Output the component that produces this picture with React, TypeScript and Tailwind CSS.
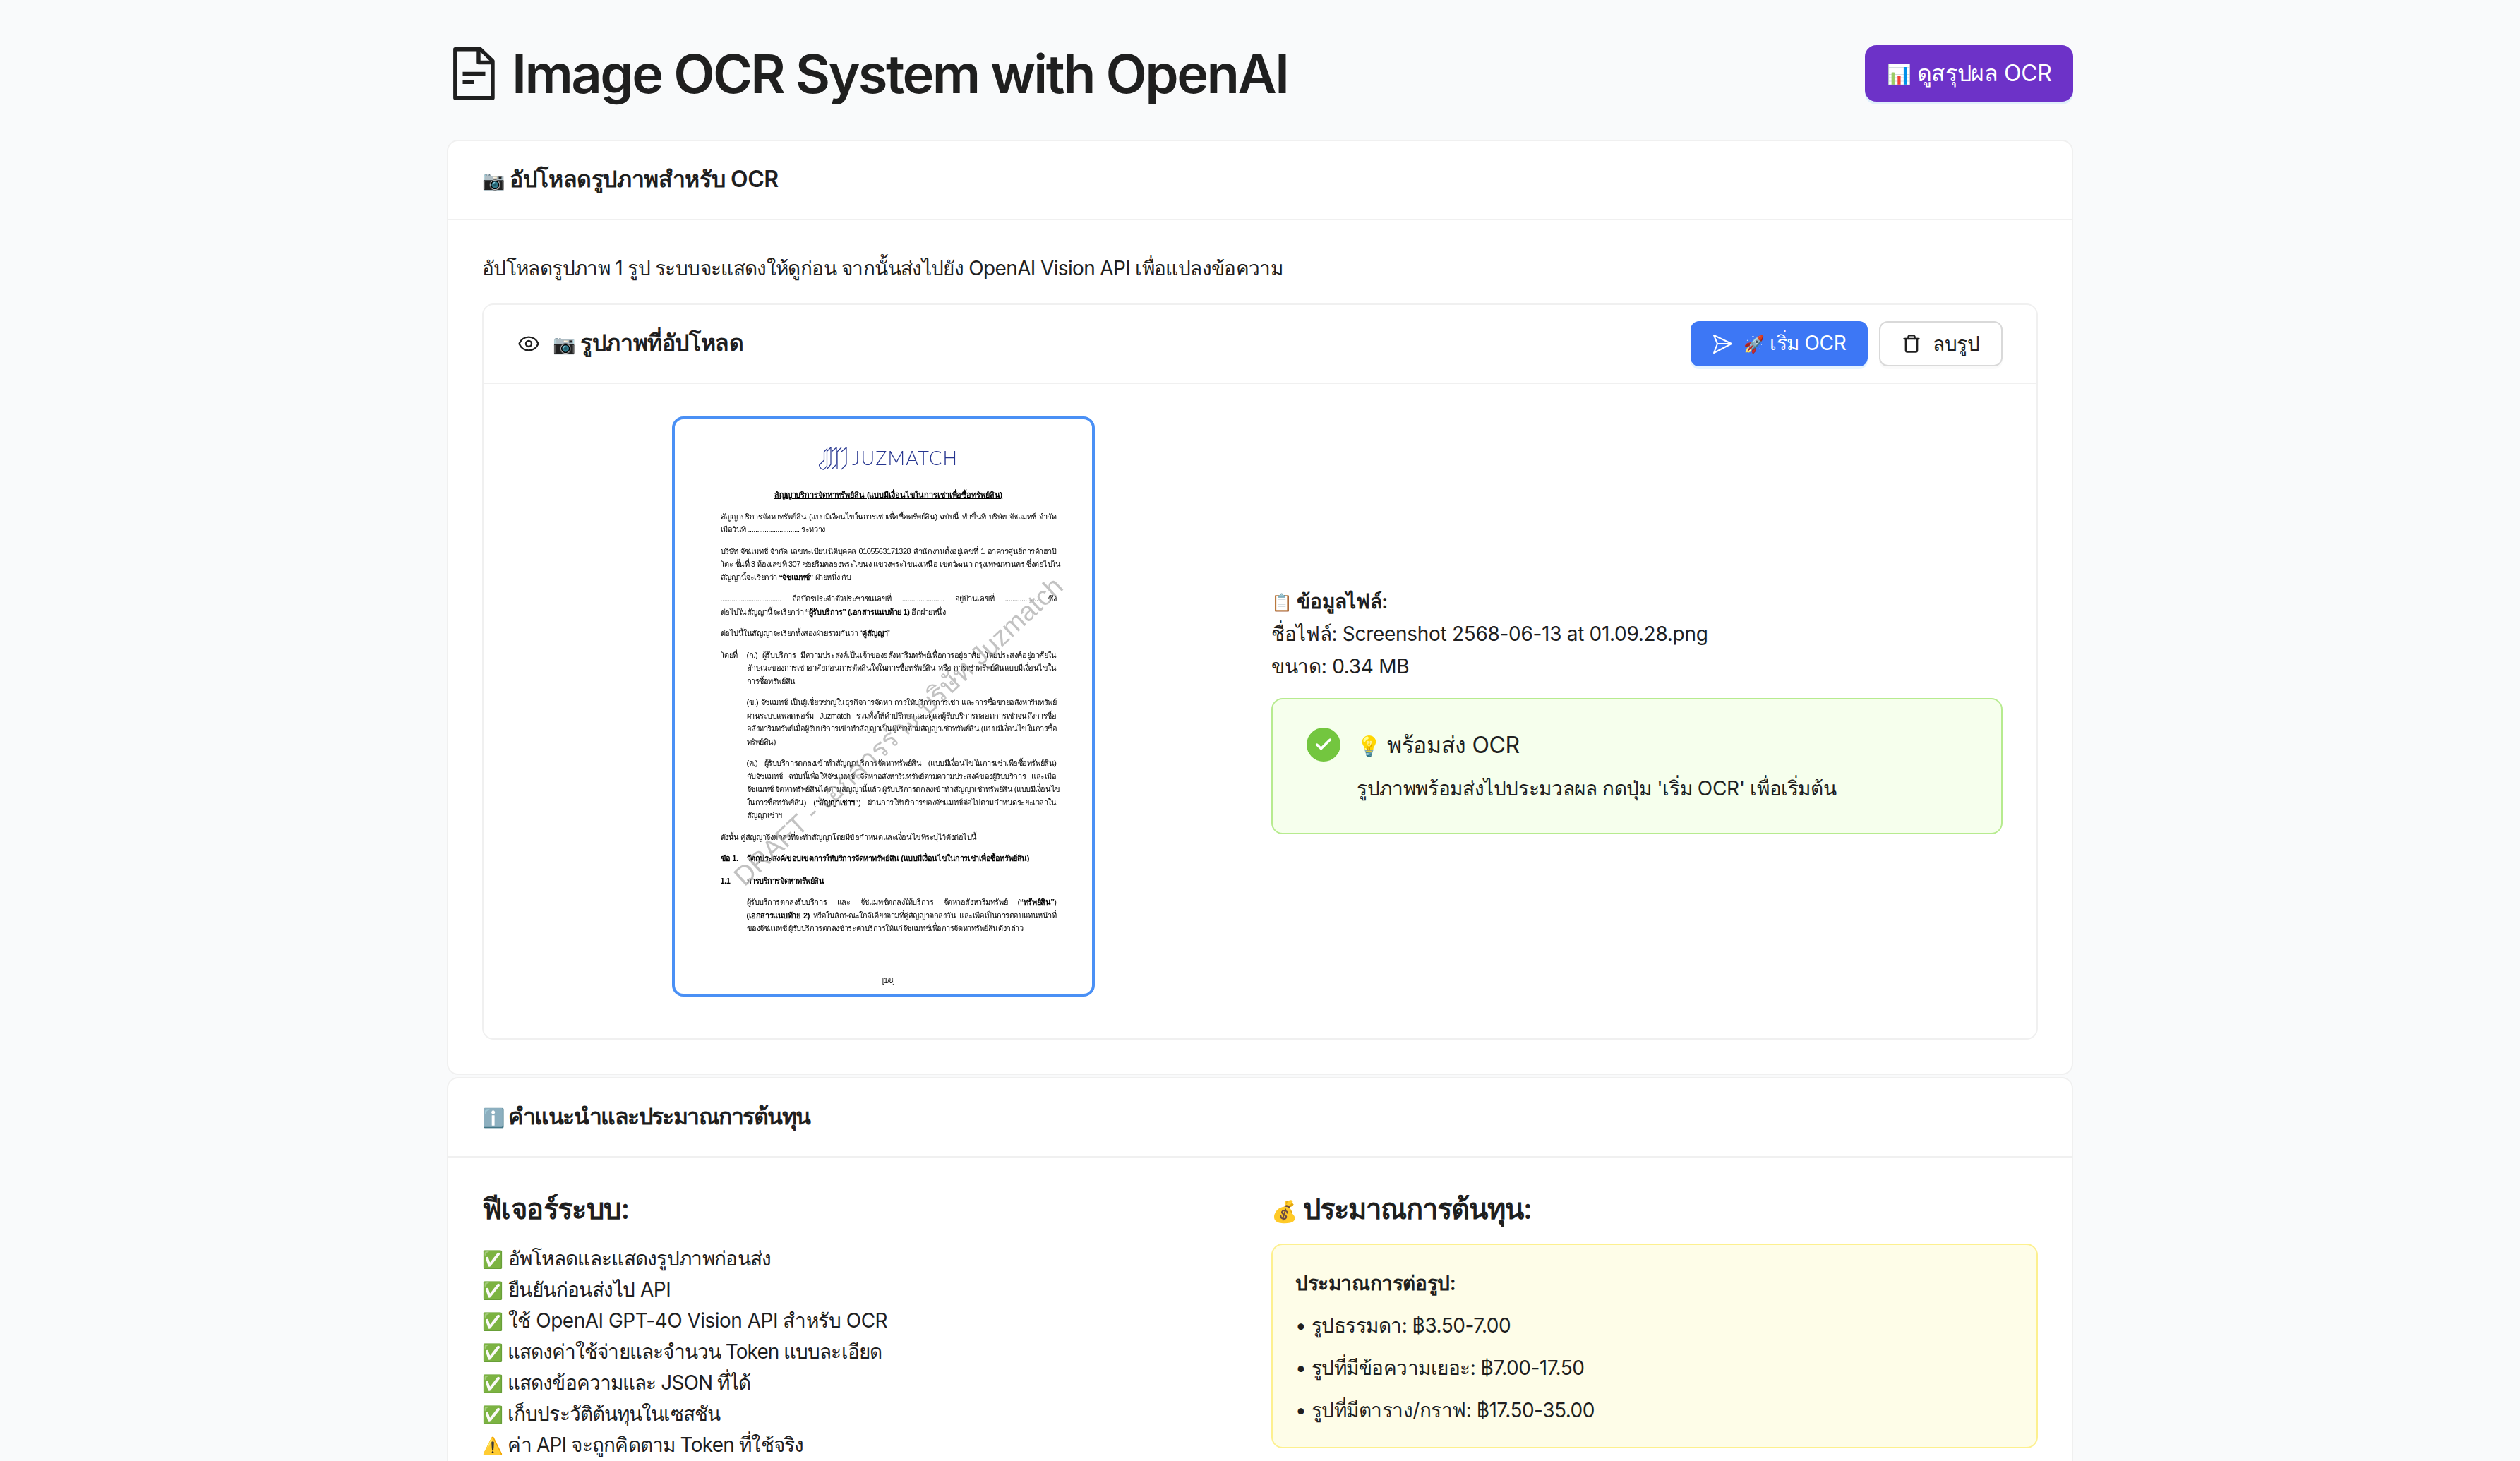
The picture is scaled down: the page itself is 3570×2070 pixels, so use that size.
import { Eye, Trash, Check } from 'lucide-react'
import type { ReactNode } from 'react'

const sans = "font-['Inter','Noto_Sans',sans-serif]"

function Card({ title, children }: { title: ReactNode; children: ReactNode }) {
  return (
    <div className="rounded-2xl border-2 border-[#f0f0f0] bg-white">
      <div className="flex h-[112px] items-center border-b-2 border-[#f0f0f0] px-12 text-[32px] font-semibold">{title}</div>
      {children}
    </div>
  )
}

function Line({ children, full, className }: { children: ReactNode; full?: boolean; className?: string }) {
  return (
    <div className={`h-[18.5px] whitespace-nowrap ${full ? 'text-justify [text-align-last:justify]' : ''} ${className ?? ''}`}>
      {children}
    </div>
  )
}

function DocImage() {
  return (
    <div className="relative h-[822px] w-[599px] overflow-hidden rounded-2xl border-4 border-[#4a90f5] bg-white">
      <div className="h-full pl-[65px] pr-[50px] pt-[30px] font-['Liberation_Sans',sans-serif] text-[11px] leading-[18.5px] tracking-[-0.44px] text-black blur-[0.25px]">
        <div className="mb-[18px] flex h-[50px] items-center justify-center gap-[7px] text-[#26358f]">
          <svg width="40" height="33" viewBox="0 0 40 33" fill="none" stroke="currentColor" strokeWidth="1.2">
            <path d="M0.5 26l7-7v-12l4-4v24l-4 5c-3 1-6-2-7-6z" />
            <path d="M17 1v24l-5 6M25 1v24l-7 7M39 1v24l-7 7" />
            <path d="M17 1l-5 5M25 1l-7 6M32 1l-6 6v25M39 1l-7 6" />
          </svg>
          <span className="font-['Lato',sans-serif] text-[27px] font-light tracking-[1.2px]">JUZMATCH</span>
        </div>
        <div className="mb-[12px] text-center font-bold tracking-[-0.1px] underline">สัญญาบริการจัดหาทรัพย์สิน (แบบมีเงื่อนไขในการเช่าเพื่อซื้อทรัพย์สิน)</div>
        <div className="mb-[12px]">
          <Line full>สัญญาบริการจัดหาทรัพย์สิน (แบบมีเงื่อนไขในการเช่าเพื่อซื้อทรัพย์สิน) ฉบับนี้ ทำขึ้นที่ บริษัท จัชแมทช์ จำกัด</Line>
          <Line>เมื่อวันที่ ............................ ระหว่าง</Line>
        </div>
        <div className="mb-[12px]">
          <Line full>บริษัท จัชแมทช์ จำกัด เลขทะเบียนนิติบุคคล 0105563171328 สำนักงานตั้งอยู่เลขที่ 1 อาคารศูนย์การค้าฮาบิ</Line>
          <Line full>โตะ ชั้นที่ 3 ห้องเลขที่ 307 ซอยริมคลองพระโขนง แขวงพระโขนงเหนือ เขตวัฒนา กรุงเทพมหานคร ซึ่งต่อไปใน</Line>
          <Line>สัญญานี้จะเรียกว่า <b>“จัชแมทช์”</b> ฝ่ายหนึ่ง กับ</Line>
        </div>
        <div className="mb-[12px]">
          <Line full>................................. ถือบัตรประจำตัวประชาชนเลขที่ ....................... อยู่บ้านเลขที่ .................. ซึ่ง</Line>
          <Line>ต่อไปในสัญญานี้จะเรียกว่า <b>“ผู้รับบริการ” (เอกสารแนบท้าย 1)</b> อีกฝ่ายหนึ่ง</Line>
        </div>
        <div className="mb-[12px]">
          <Line>ต่อไปนี้ในสัญญาจะเรียกทั้งสองฝ่ายรวมกันว่า “<b>คู่สัญญา</b>”</Line>
        </div>
        <div className="relative mb-[12px] pl-[37px]">
          <span className="absolute left-0 top-0">โดยที่</span>
          <Line full>(ก.) ผู้รับบริการ มีความประสงค์เป็นเจ้าของอสังหาริมทรัพย์เพื่อการอยู่อาศัย โดยประสงค์อยู่อาศัยใน</Line>
          <Line full>ลักษณะของการเช่าอาศัยก่อนการตัดสินใจในการซื้อทรัพย์สิน หรือ การเช่าทรัพย์สินแบบมีเงื่อนไขใน</Line>
          <Line>การซื้อทรัพย์สิน</Line>
        </div>
        <div className="mb-[12px] pl-[37px]">
          <Line full>(ข.) จัชแมทช์ เป็นผู้เชี่ยวชาญในธุรกิจการจัดหา การให้บริการการเช่า และการซื้อขายอสังหาริมทรัพย์</Line>
          <Line full>ผ่านระบบแพลตฟอร์ม Juzmatch รวมทั้งให้คำปรึกษาและดูแลผู้รับบริการตลอดการเช่าจนถึงการซื้อ</Line>
          <Line full>อสังหาริมทรัพย์เมื่อผู้รับบริการเข้าทำสัญญาเป็นผู้เช่าตามสัญญาเช่าทรัพย์สิน (แบบมีเงื่อนไขในการซื้อ</Line>
          <Line>ทรัพย์สิน)</Line>
        </div>
        <div className="mb-[12px] pl-[37px]">
          <Line full>(ค.) ผู้รับบริการตกลงเข้าทำสัญญาบริการจัดหาทรัพย์สิน (แบบมีเงื่อนไขในการเช่าเพื่อซื้อทรัพย์สิน)</Line>
          <Line full>กับจัชแมทช์ ฉบับนี้เพื่อให้จัชแมทช์ จัดหาอสังหาริมทรัพย์ตามความประสงค์ของผู้รับบริการ และเมื่อ</Line>
          <Line full>จัชแมทช์ จัดหาทรัพย์สินได้ตามสัญญานี้แล้ว ผู้รับบริการตกลงเข้าทำสัญญาเช่าทรัพย์สิน (แบบมีเงื่อนไข</Line>
          <Line full>ในการซื้อทรัพย์สิน) (<b>“สัญญาเช่าฯ”</b>) ผ่านการให้บริการของจัชแมทช์ต่อไปตามกำหนดระยะเวลาใน</Line>
          <Line>สัญญาเช่าฯ</Line>
        </div>
        <div className="mb-[12px]">
          <Line>ดังนั้น คู่สัญญาจึงตกลงที่จะทำสัญญาโดยมีข้อกำหนดและเงื่อนไขที่ระบุไว้ดังต่อไปนี้</Line>
        </div>
        <div className="relative mb-[13px] pl-[37px] font-bold">
          <span className="absolute left-0 top-0">ข้อ 1.</span>
          <Line>วัตถุประสงค์/ขอบเขตการให้บริการจัดหาทรัพย์สิน (แบบมีเงื่อนไขในการเช่าเพื่อซื้อทรัพย์สิน)</Line>
        </div>
        <div className="relative mb-[12px] pl-[37px] font-bold">
          <span className="absolute left-0 top-0">1.1</span>
          <Line>การบริการจัดหาทรัพย์สิน</Line>
        </div>
        <div className="pl-[37px]">
          <Line full>ผู้รับบริการตกลงรับบริการ และ จัชแมทช์ตกลงให้บริการ จัดหาอสังหาริมทรัพย์ (<b>“ทรัพย์สิน”</b>)</Line>
          <Line full><b>(เอกสารแนบท้าย 2)</b> หรือในลักษณะใกล้เคียงตามที่คู่สัญญาตกลงกัน และเพื่อเป็นการตอบแทนหน้าที่</Line>
          <Line>ของจัชแมทช์ ผู้รับบริการตกลงชำระค่าบริการให้แก่จัชแมทช์เพื่อการจัดหาทรัพย์สินดังกล่าว</Line>
        </div>
        <div className="absolute bottom-[9px] left-[65px] right-[50px] text-center text-[10px]">[1/8]</div>
        {/* watermark */}
        <div className="absolute left-[9px] top-[430px] w-[600px] -rotate-[43deg] whitespace-nowrap text-center text-[38px] leading-none tracking-normal text-[#999]/60">
          DRAFT - เอกสารร่าง บริษัท Juzmatch
        </div>
      </div>
    </div>
  )
}

const features = [
  { icon: '✅', text: 'อัพโหลดและแสดงรูปภาพก่อนส่ง', cls: 'tracking-[-0.7px]' },
  { icon: '✅', text: 'ยืนยันก่อนส่งไป API', cls: 'tracking-[-0.55px]' },
  { icon: '✅', text: 'ใช้ OpenAI GPT-4O Vision API สำหรับ OCR', cls: 'tracking-[-0.5px]' },
  { icon: '✅', text: 'แสดงค่าใช้จ่ายและจำนวน Token แบบละเอียด', cls: 'tracking-[-0.95px]' },
  { icon: '✅', text: 'แสดงข้อความและ JSON ที่ได้', cls: 'tracking-[-0.9px]' },
  { icon: '✅', text: 'เก็บประวัติต้นทุนในเซสชัน', cls: 'tracking-[-0.9px]' },
  { icon: '⚠️', text: 'ค่า API จะถูกคิดตาม Token ที่ใช้จริง', cls: 'tracking-[-0.77px]' },
]

export default function App() {
  return (
    <div className={`h-screen overflow-hidden bg-[#f9fafb] text-[28px] leading-[44px] tracking-[-0.45px] text-[#1f1f1f] ${sans}`}>
      <div className="mx-auto w-[2304px] pt-16">
        <div className="mb-[54px] flex h-20 items-center justify-between">
          <h1 className="flex items-center gap-[24px] pl-[9px] text-[76px] font-semibold leading-[92px] tracking-[-2.6px]">
            <svg className="h-[75px] w-[59px]" viewBox="11.5 11.5 59 75" fill="none" stroke="#1f1f1f" strokeWidth="5.4" strokeLinejoin="round">
              <path d="M14.3 14.3H50L67.5 31V83.3H14.3Z" />
              <path d="M47.5 14.3V33H67.5" />
              <path d="M25 49H57M25 60.7H40.5" />
            </svg>
            Image OCR System with OpenAI
          </h1>
          <button className="h-20 w-[295px] rounded-2xl bg-[#6d32c8] text-[32px] tracking-[-0.4px] text-white shadow-[0_4px_0_rgba(5,145,255,0.1)]"><span className="text-[28px]">📊</span> ดูสรุปผล OCR</button>
        </div>

        <Card title={<span className="tracking-[-0.4px]"><span className="text-[26px]">📷</span> อัปโหลดรูปภาพสำหรับ OCR</span>}>
          <div className="px-12 pb-12 pt-[46px]">
            <p className="mb-7 tracking-[-0.64px]">อัปโหลดรูปภาพ 1 รูป ระบบจะแสดงให้ดูก่อน จากนั้นส่งไปยัง OpenAI Vision API เพื่อแปลงข้อความ</p>
            <div className="rounded-2xl border-2 border-[#f0f0f0]">
              <div className="flex h-[112px] items-center justify-between border-b-2 border-[#f0f0f0] px-12">
                <div className="flex items-center gap-[18px] text-[32px] font-semibold tracking-[-0.4px]">
                  <Eye size={32} strokeWidth={1.8} />
                  <span><span className="text-[26px]">📷</span> รูปภาพที่อัปโหลด</span>
                </div>
                <div className="flex gap-4">
                  <button className="flex h-16 w-[251px] items-center justify-center gap-4 rounded-xl bg-[#3d77f5] tracking-[-0.3px] text-white shadow-[0_4px_0_rgba(5,145,255,0.1)]">
                    <svg width="28" height="28" viewBox="0 0 28 28" fill="none" stroke="white" strokeWidth="2" strokeLinejoin="round">
                      <path d="M2 2L27 14L2 27L7 14Z" />
                      <path d="M7 14H27" />
                    </svg>
                    <span><span className="text-[24px]">🚀</span> เริ่ม OCR</span>
                  </button>
                  <button className="flex h-16 w-[175px] items-center justify-center gap-4 rounded-xl border-2 border-[#d9d9d9] bg-white shadow-[0_4px_0_rgba(0,0,0,0.02)]">
                    <Trash size={28} strokeWidth={2} />
                    ลบรูป
                  </button>
                </div>
              </div>
              <div className="grid grid-cols-2 items-center gap-8 px-12 pb-[59px] pt-[46px]">
                <div className="flex justify-center">
                  <DocImage />
                </div>
                <div className="pt-[10px] leading-[45.5px] tracking-[-0.3px]">
                  <div className="font-semibold"><span className="text-[24px]">📋</span> ข้อมูลไฟล์:</div>
                  <div>ชื่อไฟล์: Screenshot 2568-06-13 at 01.09.28.png</div>
                  <div>ขนาด: 0.34 MB</div>
                  <div className="mt-[22px] flex h-[193px] gap-[23px] rounded-2xl border-2 border-[#b7eb8f] bg-[#f6ffed] px-12 pt-10 leading-[44px]">
                    <div className="flex h-12 w-12 shrink-0 items-center justify-center rounded-full bg-[#73c63f] text-white">
                      <Check size={28} strokeWidth={3} />
                    </div>
                    <div className="mt-[1px]">
                      <div className="h-12 text-[32px] leading-[48px] tracking-[-0.4px]"><span className="text-[28px]">💡</span> พร้อมส่ง OCR</div>
                      <div className="mt-[15px] tracking-[-0.35px]">รูปภาพพร้อมส่งไปประมวลผล กดปุ่ม 'เริ่ม OCR' เพื่อเริ่มต้น</div>
                    </div>
                  </div>
                </div>
              </div>
            </div>
          </div>
        </Card>

        <div className="mt-[3px]">
          <Card title={<span className="tracking-[-1.55px]"><span className="text-[26px]">ℹ️</span> คำแนะนำและประมาณการต้นทุน</span>}>
            <div className="grid grid-cols-2 gap-8 px-12 pb-12 pt-[45px]">
              <div>
                <h3 className="mb-5 h-14 text-[40px] font-semibold leading-[56px] tracking-[-0.6px]">ฟีเจอร์ระบบ:</h3>
                {features.map(f => (
                  <div key={f.text} className={`h-11 ${f.cls}`}>
                    <span className="text-[24px]">{f.icon}</span> {f.text}
                  </div>
                ))}
              </div>
              <div>
                <h3 className="mb-[21px] h-14 text-[40px] font-semibold leading-[56px] tracking-[-1px]"><span className="text-[30px]">💰</span> ประมาณการต้นทุน:</h3>
                <div className="h-[290px] rounded-2xl border-2 border-[#fdf08f] bg-[#fefde8] p-8">
                  <div className="mb-4 h-11 font-semibold tracking-[-0.4px]">ประมาณการต่อรูป:</div>
                  <div className="flex flex-col gap-4 tracking-[-0.5px]">
                    <div className="h-11">• รูปธรรมดา: ฿3.50-7.00</div>
                    <div className="h-11">• รูปที่มีข้อความเยอะ: ฿7.00-17.50</div>
                    <div className="h-11">• รูปที่มีตาราง/กราฟ: ฿17.50-35.00</div>
                  </div>
                </div>
              </div>
            </div>
          </Card>
        </div>
      </div>
    </div>
  )
}
